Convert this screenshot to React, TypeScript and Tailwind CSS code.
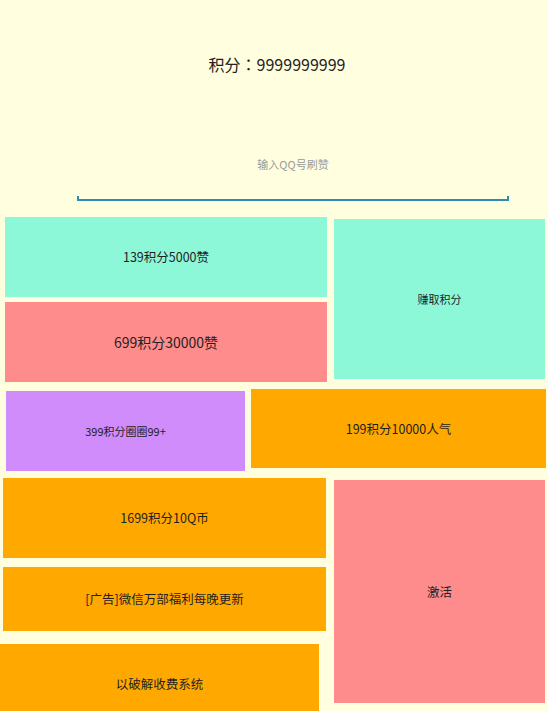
const tile =
  "flex items-center justify-center text-center text-[#1f1f1f] leading-[16px]";

export default function App() {
  return (
    <div className="w-[548px] h-[711px] overflow-hidden bg-[#ffffe0] font-['Noto_Sans_CJK_SC','Noto_Sans',sans-serif] text-[#222]">
      {/* header */}
      <div className="pt-[54px] pl-[6px] text-center text-[16px] leading-[20px] text-[#222]">
        积分<span className="font-['Noto_Sans_CJK_JP',sans-serif]">：</span>9999999999
      </div>

      {/* qq input */}
      <div className="mt-[82px] pl-[38px] text-center text-[11px] leading-[16px] text-[#9a9a9a]">
        输入QQ号刷赞
      </div>
      <div className="ml-[77px] mt-[24px] w-[432px] h-[5px] border-x-2 border-b-2 border-[#2a8db5]" />

      {/* row 1 */}
      <div className="mt-[16px] flex items-start">
        <div className="ml-[5px] w-[322px] flex flex-col gap-[5px]">
          <div className={`${tile} h-[80px] bg-[#8df8d8] text-[12.5px]`}>
            139积分5000赞
          </div>
          <div className={`${tile} h-[80px] bg-[#ff8c8c] text-[14px]`}>
            699积分30000赞
          </div>
        </div>
        <div className={`${tile} ml-[7px] mt-[2px] w-[211px] h-[160px] bg-[#8df8d8] text-[11px]`}>
          赚取积分
        </div>
      </div>

      {/* row 2 */}
      <div className="flex items-start">
        <div className={`${tile} ml-[6px] mt-[9px] w-[239px] h-[80px] bg-[#d18cfb] text-[11px]`}>
          399积分圈圈99+
        </div>
        <div className={`${tile} ml-[6px] mt-[7px] w-[295px] h-[79px] bg-[#ffa800] text-[12.5px]`}>
          199积分10000人气
        </div>
      </div>

      {/* row 3 */}
      <div className="flex items-start">
        <div className="ml-[3px] w-[323px] flex flex-col">
          <div className={`${tile} mt-[7px] h-[80px] bg-[#ffa800] text-[12.5px]`}>
            1699积分10Q币
          </div>
          <div className={`${tile} mt-[9px] h-[64px] bg-[#ffa800] text-[12.5px]`}>
            [广告]微信万部福利每晚更新
          </div>
          <div className={`${tile} mt-[13px] -ml-[3px] w-[319px] h-[80px] bg-[#ffa800] text-[12.5px]`}>
            以破解收费系统
          </div>
        </div>
        <div className={`${tile} ml-[8px] mt-[9px] w-[211px] h-[223px] bg-[#ff8c8c] text-[12.5px]`}>
          激活
        </div>
      </div>
    </div>
  );
}
